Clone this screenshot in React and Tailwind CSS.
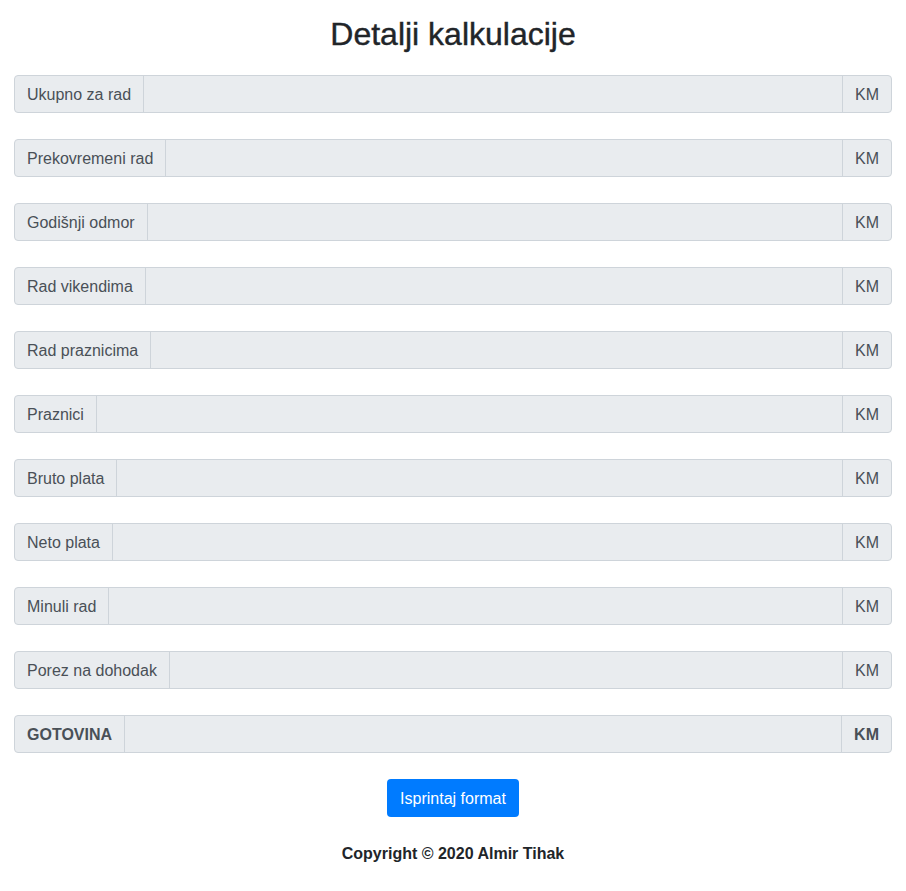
import React from "react";

const rows = [
  "Ukupno za rad",
  "Prekovremeni rad",
  "Godišnji odmor",
  "Rad vikendima",
  "Rad praznicima",
  "Praznici",
  "Bruto plata",
  "Neto plata",
  "Minuli rad",
  "Porez na dohodak",
];

function Row({ label, bold }) {
  return (
    <div className="flex h-[38px] mb-[26px] rounded-[4px] border border-[#ced4da] bg-[#e9ecef] text-[16px] text-[#495057]">
      <div className={"flex items-center pt-[2px] px-[12px] border-r border-[#ced4da] " + (bold ? "font-bold" : "")}>
        {label}
      </div>
      <input readOnly className="flex-1 min-w-0 bg-transparent outline-none" />
      <div className={"flex items-center pt-[2px] px-[12px] border-l border-[#ced4da] " + (bold ? "font-bold" : "")}>
        KM
      </div>
    </div>
  );
}

export default function App() {
  return (
    <div className="bg-white px-[14px] text-[#212529]" style={{ fontFamily: '"Liberation Sans", Arial, sans-serif' }}>
      <h2 className="text-center text-[32px] leading-[38px] mt-[15px] mb-[22px] font-medium [-webkit-text-stroke:0.4px_#212529]">
        Detalji kalkulacije
      </h2>
      {rows.map((r) => (
        <Row key={r} label={r} />
      ))}
      <Row label="GOTOVINA" bold />
      <div className="flex justify-center">
        <button className="h-[38px] pt-[2px] px-[13px] rounded-[4px] bg-[#007bff] text-white text-[16px]">
          Isprintaj format
        </button>
      </div>
      <p className="text-center font-bold text-[16px] leading-[24px] mt-[25px] pb-[25px]">
        Copyright © 2020 Almir Tihak
      </p>
    </div>
  );
}
